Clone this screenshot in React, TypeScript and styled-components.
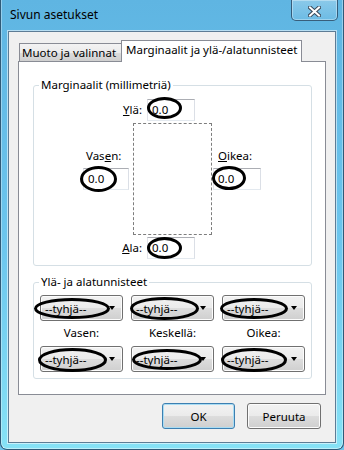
import styled, { createGlobalStyle } from 'styled-components';

const GlobalStyle = createGlobalStyle`
  html, body {
    margin: 0;
    padding: 0;
  }
  body {
    background: #6cc4ec;
    font-family: "Noto Sans", "Liberation Sans", sans-serif;
    font-size: 11.5px;
    color: #000;
  }
`;

const Window = styled.div`
  box-sizing: border-box;
  width: 344px;
  height: 450px;
  background: linear-gradient(180deg, #5fb5e2 0%, #6cc6ee 55%, #86e2f6 100%);
  border: 1px solid #2f5a78;
  border-top: none;
  border-radius: 0 0 7px 7px;
  box-shadow: inset 1px 0 rgba(255, 255, 255, 0.35), inset -1px 0 rgba(255, 255, 255, 0.35),
    inset 0 -1px rgba(255, 255, 255, 0.45);
  padding: 0 7px 6px 7px;
  display: flex;
  flex-direction: column;
`;

const TitleBar = styled.div`
  height: 31px;
  display: flex;
  align-items: flex-start;
`;

const Title = styled.div`
  padding: 7px 0 0 2px;
  line-height: 16px;
  font-size: 12px;
  color: #000;
`;

const CloseButton = styled.div`
  box-sizing: border-box;
  margin-left: auto;
  margin-right: -2px;
  width: 47px;
  height: 21px;
  border: 1px solid rgba(28, 58, 86, 0.75);
  border-top: none;
  border-radius: 0 0 5px 5px;
  background: linear-gradient(180deg, rgba(255, 255, 255, 0.28), rgba(255, 255, 255, 0.08));
  box-shadow: inset 0 0 0 1px rgba(255, 255, 255, 0.35);
  display: flex;
  align-items: center;
  justify-content: center;
  padding-top: 2px;
`;

const Client = styled.div`
  box-sizing: border-box;
  height: 412px;
  background: #f0f0f0;
  border: 1px solid #5d7c95;
  box-shadow: 0 0 0 1px rgba(255, 255, 255, 0.55);
  padding: 8px 0 0 9px;
  display: flex;
  flex-direction: column;
`;

const TabStrip = styled.div`
  display: flex;
  align-items: flex-end;
  height: 22px;
  margin-left: 1px;
  position: relative;
  z-index: 1;
`;

const Tab = styled.div<{ $active?: boolean }>`
  box-sizing: border-box;
  border: 1px solid #898c95;
  border-bottom: none;
  padding: ${(p) => (p.$active ? '0 4px' : '0 5px 0 2px')};
  height: ${(p) => (p.$active ? 22 : 18)}px;
  line-height: ${(p) => (p.$active ? 18 : 17)}px;
  margin-right: ${(p) => (p.$active ? 0 : -1)}px;
  margin-bottom: ${(p) => (p.$active ? 0 : 1)}px;
  font-size: 11.5px;
  white-space: nowrap;
  background: ${(p) => (p.$active ? '#fff' : 'linear-gradient(180deg, #f3f3f3 0%, #ebebeb 50%, #dddddd 50%, #cfcfcf 100%)')};
  position: relative;
  z-index: ${(p) => (p.$active ? 2 : 1)};
`;

const Panel = styled.div`
  box-sizing: border-box;
  width: 308px;
  height: 334px;
  margin-top: -1px;
  border: 1px solid #898c95;
  background: #fff;
  padding: 0 0 0 14px;
`;

const Group = styled.fieldset<{ $top: number }>`
  box-sizing: border-box;
  width: 279px;
  margin: ${(p) => p.$top}px 0 0 0;
  padding: 0 0 6px 0;
  min-width: 0;
  border: 1px solid #d5dfe5;
  border-radius: 3px;
`;

const Legend = styled.legend`
  margin-left: 5px;
  padding: 0 2px;
  line-height: 16px;
  font-size: 11.5px;
`;

const EdgeRow = styled.div<{ $top: number }>`
  display: flex;
  align-items: center;
  gap: 5px;
  margin: ${(p) => p.$top}px 0 0 78px;
`;

const RightLabel = styled.span`
  width: 30px;
  text-align: right;
  font-size: 11.5px;
  line-height: 16px;
`;

const MiddleGrid = styled.div`
  display: grid;
  grid-template-columns: 99px 79px 1fr;
  margin-top: 2px;
`;

const SideColumn = styled.div<{ $side: 'left' | 'right' }>`
  display: flex;
  flex-direction: column;
  align-items: flex-start;
  gap: 4px;
  padding-top: 25px;
  width: ${(p) => (p.$side === 'left' ? 46 : 48)}px;
  margin-left: ${(p) => (p.$side === 'left' ? 'auto' : '1px')};
  margin-right: ${(p) => (p.$side === 'left' ? '4px' : '0')};
`;

const SideLabel = styled.span<{ $indent: number }>`
  padding-left: ${(p) => p.$indent}px;
  font-size: 11.5px;
  line-height: 16px;
`;

const PagePreview = styled.div`
  box-sizing: border-box;
  height: 112px;
  border: 1px dashed #7d7d7d;
`;

const Anchor = styled.span`
  position: relative;
  display: inline-block;
`;

const TextBox = styled.div<{ $w: number }>`
  box-sizing: border-box;
  width: ${(p) => p.$w}px;
  height: 22px;
  padding: 0 4px;
  border: 1px solid;
  border-color: #abadb3 #dbdfe6 #e3e9ef #e2e3ea;
  background: #fff;
  font-size: 11.5px;
  line-height: 20px;
  color: #000;
`;

const Mark = styled.svg`
  position: absolute;
  overflow: visible;
  pointer-events: none;
`;

const DropGrid = styled.div<{ $top: number }>`
  display: grid;
  grid-template-columns: repeat(3, 83px);
  column-gap: 8px;
  margin: ${(p) => p.$top}px 0 0 6px;
`;

const PositionLabel = styled.div`
  text-align: center;
  font-size: 11.5px;
  line-height: 16px;
  margin: 4px 0 5px;
`;

const Combo = styled.div`
  box-sizing: border-box;
  width: 83px;
  height: 26px;
  border: 1px solid #707070;
  border-radius: 3px;
  background: linear-gradient(180deg, #f2f2f2 0%, #ebebeb 50%, #dddddd 50%, #cfcfcf 100%);
  box-shadow: inset 0 0 0 1px #fcfcfc;
  display: flex;
  align-items: center;
  justify-content: space-between;
  padding: 0 7px 0 4px;
  font-size: 11.5px;
`;

const Arrow = styled.span`
  width: 0;
  height: 0;
  border-left: 3.5px solid transparent;
  border-right: 3.5px solid transparent;
  border-top: 4px solid #000;
`;

const ButtonRow = styled.div`
  display: flex;
  justify-content: flex-end;
  gap: 12px;
  margin-top: 8px;
  padding-right: 14px;
`;

const Button = styled.button<{ $default?: boolean; $w: number }>`
  box-sizing: border-box;
  width: ${(p) => p.$w}px;
  height: 26px;
  margin: 0;
  border: 1px solid ${(p) => (p.$default ? '#3c7fb1' : '#707070')};
  border-radius: 3px;
  background: linear-gradient(180deg, #f2f2f2 0%, #ebebeb 50%, #dddddd 50%, #cfcfcf 100%);
  box-shadow: inset 0 0 0 1px ${(p) => (p.$default ? '#a9dcf3' : '#fcfcfc')};
  font-family: "Noto Sans", "Liberation Sans", sans-serif;
  font-size: 11.5px;
  color: #000;
  padding: 0;
`;

type Ring = { x: number; y: number; w: number; h: number };

function RingMark({ x, y, w, h }: Ring) {
  return (
    <Mark style={{ left: x, top: y }} width={w} height={h}>
      <ellipse cx={w / 2} cy={h / 2} rx={w / 2 - 1.5} ry={h / 2 - 1.5} fill="none" stroke="#000" strokeWidth={3} />
    </Mark>
  );
}

function Field({ w, ring }: { w: number; ring: Ring }) {
  return (
    <Anchor>
      <TextBox $w={w}>0.0</TextBox>
      <RingMark {...ring} />
    </Anchor>
  );
}

function Dropdown({ ring }: { ring: Ring }) {
  return (
    <Anchor>
      <Combo>
        <span>--tyhjä--</span>
        <Arrow />
      </Combo>
      <RingMark {...ring} />
    </Anchor>
  );
}

const topRings: Ring[] = [
  { x: -6, y: 3, w: 76, h: 21 },
  { x: -1, y: 2, w: 69, h: 23 },
  { x: -2, y: 3, w: 68, h: 21 },
];
const bottomRings: Ring[] = [
  { x: -2, y: 2, w: 69, h: 24 },
  { x: 1, y: 3, w: 70, h: 21 },
  { x: -1, y: 2, w: 66, h: 24 },
];

export default function App() {
  return (
    <>
      <GlobalStyle />
      <Window>
        <TitleBar>
          <Title>Sivun asetukset</Title>
          <CloseButton>
            <svg width="13" height="11" viewBox="0 0 13 11">
              <path d="M2 1.5 L11 9.5 M11 1.5 L2 9.5" stroke="#3b4a5a" strokeWidth="4" strokeLinecap="square" />
              <path d="M2 1.5 L11 9.5 M11 1.5 L2 9.5" stroke="#fff" strokeWidth="2" strokeLinecap="square" />
            </svg>
          </CloseButton>
        </TitleBar>
        <Client>
          <TabStrip>
            <Tab>Muoto ja valinnat</Tab>
            <Tab $active>Marginaalit ja ylä-/alatunnisteet</Tab>
          </TabStrip>
          <Panel>
            <Group $top={15}>
              <Legend>Marginaalit (millimetriä)</Legend>
              <EdgeRow $top={6}>
                <RightLabel>
                  <u>Y</u>lä:
                </RightLabel>
                <Field w={48} ring={{ x: 0, y: -2, w: 35, h: 22 }} />
              </EdgeRow>
              <MiddleGrid>
                <SideColumn $side="left">
                  <SideLabel $indent={3}>
                    Vas<u>e</u>n:
                  </SideLabel>
                  <Field w={46} ring={{ x: -3, y: -2, w: 37, h: 26 }} />
                </SideColumn>
                <PagePreview />
                <SideColumn $side="right">
                  <SideLabel $indent={5}>
                    <u>O</u>ikea:
                  </SideLabel>
                  <Field w={48} ring={{ x: -1, y: -2, w: 34, h: 24 }} />
                </SideColumn>
              </MiddleGrid>
              <EdgeRow $top={2}>
                <RightLabel>
                  <u>A</u>la:
                </RightLabel>
                <Field w={48} ring={{ x: 0, y: 0, w: 35, h: 22 }} />
              </EdgeRow>
            </Group>
            <Group $top={8}>
              <Legend>Ylä- ja alatunnisteet</Legend>
              <DropGrid $top={5}>
                {topRings.map((r, i) => (
                  <Dropdown key={i} ring={r} />
                ))}
                <PositionLabel>Vasen:</PositionLabel>
                <PositionLabel>Keskellä:</PositionLabel>
                <PositionLabel>Oikea:</PositionLabel>
                {bottomRings.map((r, i) => (
                  <Dropdown key={i} ring={r} />
                ))}
              </DropGrid>
            </Group>
          </Panel>
          <ButtonRow>
            <Button $default $w={73}>OK</Button>
            <Button $w={74}>Peruuta</Button>
          </ButtonRow>
        </Client>
      </Window>
    </>
  );
}
